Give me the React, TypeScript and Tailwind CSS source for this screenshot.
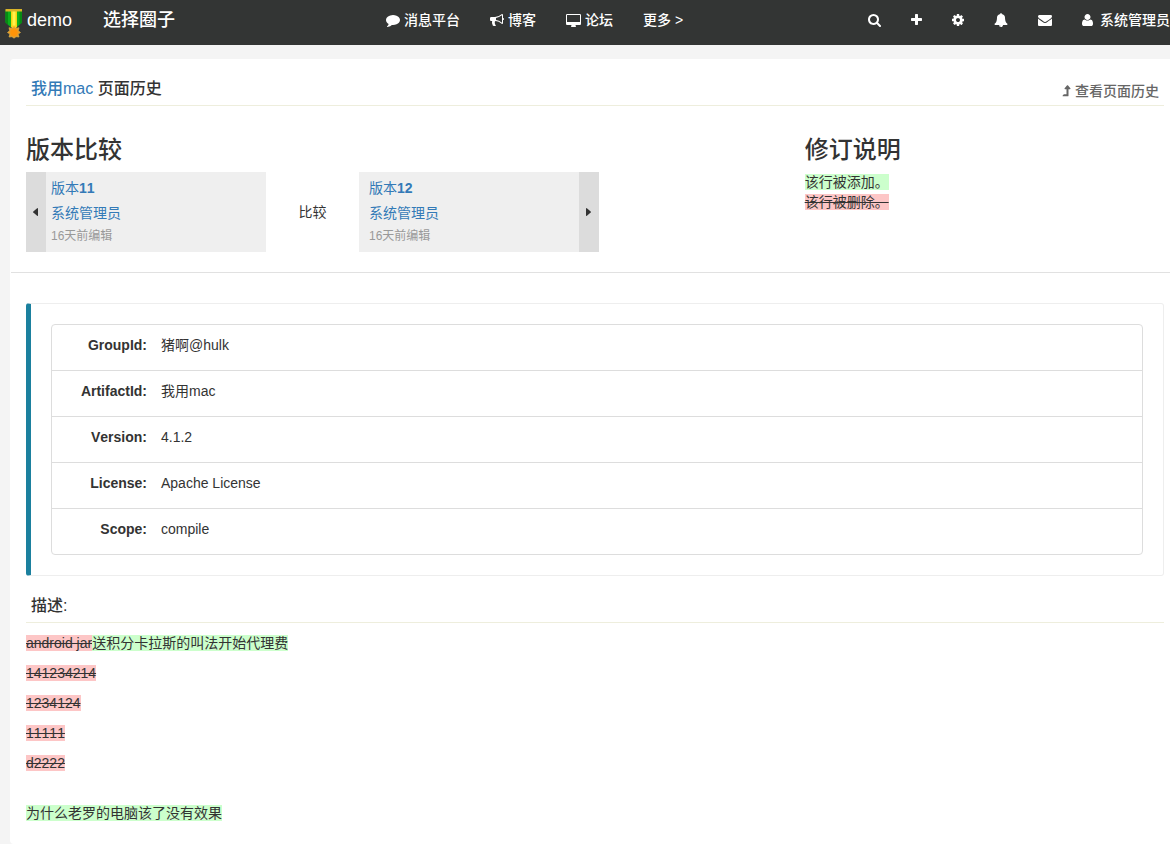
import type { ReactNode } from 'react';

type IconProps = {
  box: string;
  className: string;
  d: string;
};

const Icon = ({ box, className, d }: IconProps) => (
  <svg viewBox={box} className={`shrink-0 ${className}`} fill="currentColor" aria-hidden="true">
    <path d={d} />
  </svg>
);

const paths = {
  comment:
    'M1792 896q0 174-120 321.5t-326 233-450 85.5q-70 0-145-8-198 175-460 242-49 14-114 22-17 2-30.5-9t-17.5-29v-1q-3-4-.5-12t2-10 4.5-9.5l6-9 7-8.5 8-9q7-8 31-34.5t34.5-38 31-39.5 32.5-51 27-59 26-76q-157-89-247.5-220t-90.5-281q0-130 71-248.5t191-204.5 286-136.5 348-50.5q244 0 450 85.5t326 233 120 321.5z',
  bullhorn:
    'M1664 640q53 0 90.5 37.5t37.5 90.5-37.5 90.5-90.5 37.5v384q0 52-38 90t-90 38q-417-347-812-380-58 19-91 66t-31 100.5 40 92.5q-20 33-23 65.5t6 58 33.5 55 48 50 61.5 50.5q-29 58-111.5 83t-168.5 11.5-132-55.5q-7-23-29.5-87.5t-32-94.5-23-89-15-101 3.5-98.5 22-110.5h-122q-66 0-113-47t-47-113v-192q0-66 47-113t113-47h480q435 0 896-384 52 0 90 38t38 90v384zm-128 604v-954q-394 302-768 343v270q377 42 768 341z',
  desktop:
    'M1792 992v-832q0-13-9.5-22.5t-22.5-9.5h-1600q-13 0-22.5 9.5t-9.5 22.5v832q0 13 9.5 22.5t22.5 9.5h1600q13 0 22.5-9.5t9.5-22.5zm128-832v1088q0 66-47 113t-113 47h-544q0 37 16 77.5t32 71 16 43.5q0 26-19 45t-45 19h-512q-26 0-45-19t-19-45q0-14 16-44t32-70 16-78h-544q-66 0-113-47t-47-113v-1088q0-66 47-113t113-47h1600q66 0 113 47t47 113z',
  search:
    'M1216 832q0-185-131.5-316.5t-316.5-131.5-316.5 131.5-131.5 316.5 131.5 316.5 316.5 131.5 316.5-131.5 131.5-316.5zm512 832q0 52-38 90t-90 38q-54 0-90-38l-343-342q-179 124-399 124-143 0-273.5-55.5t-225-150-150-225-55.5-273.5 55.5-273.5 150-225 225-150 273.5-55.5 273.5 55.5 225 150 150 225 55.5 273.5q0 220-124 399l343 343q37 37 37 90z',
  plus: 'M1600 736v192q0 40-28 68t-68 28h-416v416q0 40-28 68t-68 28h-192q-40 0-68-28t-28-68v-416h-416q-40 0-68-28t-28-68v-192q0-40 28-68t68-28h416v-416q0-40 28-68t68-28h192q40 0 68 28t28 68v416h416q40 0 68 28t28 68z',
  cog: 'M1152 896q0-106-75-181t-181-75-181 75-75 181 75 181 181 75 181-75 75-181zm512-109v222q0 12-8 23t-20 13l-185 28q-19 54-39 91 35 50 107 138 10 12 10 25t-9 23q-27 37-99 108t-94 71q-12 0-26-9l-138-108q-44 23-91 38-16 136-29 186-7 28-36 28h-222q-14 0-24.5-8.5t-11.5-21.5l-28-184q-49-16-90-37l-141 107q-10 9-25 9-14 0-25-11-126-114-165-168-7-10-7-23 0-12 8-23 15-21 51-66.5t54-70.5q-27-50-41-99l-183-27q-13-2-21-12.5t-8-23.5v-222q0-12 8-23t19-13l186-28q14-46 39-92-40-57-107-138-10-12-10-24 0-10 9-23 26-36 98.5-107.5t94.5-71.5q13 0 26 10l138 107q44-23 91-38 16-136 29-186 7-28 36-28h222q14 0 24.5 8.5t11.5 21.5l28 184q49 16 90 37l142-107q9-9 24-9 13 0 25 10 129 119 165 170 7 8 7 22 0 12-8 23-15 21-51 66.5t-54 70.5q26 50 41 98l183 28q13 2 21 12.5t8 23.5z',
  bell: 'M912 1696q0-16-16-16-59 0-101.5-42.5t-42.5-101.5q0-16-16-16t-16 16q0 73 51.5 124.5t124.5 51.5q16 0 16-16zm816-288q0 52-38 90t-90 38h-448q0 106-75 181t-181 75-181-75-75-181h-448q-52 0-90-38t-38-90q50-42 91-88t85-119.5 74.5-158.5 50-206 19.5-260q0-152 117-282.5t307-158.5q-8-19-8-39 0-40 28-68t68-28 68 28 28 68q0 20-8 39 190 28 307 158.5t117 282.5q0 139 19.5 260t50 206 74.5 158.5 85 119.5 91 88z',
  envelope:
    'M1792 710v794q0 66-47 113t-113 47h-1472q-66 0-113-47t-47-113v-794q44 49 101 87 362 246 497 345 57 42 92.5 65.5t94.5 48 110 24.5h2q51 0 110-24.5t94.5-48 92.5-65.5q170-123 498-345 57-39 100-87zm0-294q0 79-49 151t-122 123q-376 261-468 325-10 7-42.5 31t-54 38.5-52 32.5-57.5 27-50 9h-2q-23 0-50-9t-57.5-27-52-32.5-54-38.5-42.5-31q-91-64-262-182.5t-205-142.5q-62-42-117-115.5t-55-136.5q0-78 41.5-130t118.5-52h1472q65 0 112.5 47t47.5 113z',
  user: 'M1600 1405q0 120-73 189.5t-194 69.5h-874q-121 0-194-69.5t-73-189.5q0-53 3.5-103.5t14-109 26.5-108.5 43-97.5 62-81 85.5-53.5 111.5-20q9 0 42 21.5t74.5 48 108 48 133.5 21.5 133.5-21.5 108-48 74.5-48 42-21.5q61 0 111.5 20t85.5 53.5 62 81 43 97.5 26.5 108.5 14 109 3.5 103.5zm-320-893q0 159-112.5 271.5t-271.5 112.5-271.5-112.5-112.5-271.5 112.5-271.5 271.5-112.5 271.5 112.5 112.5 271.5z',
  levelUp:
    'M1402 621q-19 37-58 37h-192v864q0 14-9 23t-23 9h-704q-21 0-29-18-8-20 4-35l160-192q9-11 25-11h320v-640h-192q-40 0-58-37-17-37 9-68l320-384q18-22 49-22t49 22l320 384q27 32 9 68z',
};

const Medal = () => (
  <svg viewBox="0 0 18 30" className="h-[30px] w-[18px] shrink-0" aria-hidden="true">
    <path d="M0.5 1h16.500v12.500l-5 4.500h-6.500l-5-4.500z" fill="#0cb01c" />
    <path d="M0.5 1h2.500v14.500l-2.500-2zM14.500 1h2.500v12.500l-2.500 2z" fill="#078a14" />
    <path d="M6 1h6v17h-6z" fill="#f4d410" />
    <path d="M7.500 2h3v16h-3z" fill="#fff14a" />
    <path d="M0.500 0h16.500v2.500h-16.500z" fill="#d8b429" />
    <path d="M6.500 16.500h5v3h-5z" fill="#ffd21c" />
    <path
      d="M9 17.500l1.800 2 3.200-.8-.7 3 2.200 1.800-2.400 1.500.9 3-3-.3-2 1.500-2-1.500-3 .3.9-3-2.400-1.500 2.200-1.800-.7-3 3.200.8z"
      fill="#f09a1e"
      stroke="#d9b04a"
      strokeWidth="0.700"
    />
    <circle cx="9" cy="23.500" r="3.500" fill="#ff9408" />
  </svg>
);

const tools = [
  { label: '搜索', box: '64 0 1664 1792', size: 'h-[14px] w-[13px]', d: paths.search },
  { label: '新建', box: '192 0 1408 1792', size: 'h-[14px] w-[11px]', d: paths.plus },
  { label: '设置', box: '128 0 1536 1792', size: 'h-[14px] w-[12px]', d: paths.cog },
  { label: '通知', box: '0 0 1792 1792', size: 'h-[14px] w-[14px]', d: paths.bell },
  { label: '私信', box: '0 0 1792 1792', size: 'h-[14px] w-[14px]', d: paths.envelope },
];

const artifact = [
  { name: 'GroupId:', value: '猪啊@hulk' },
  { name: 'ArtifactId:', value: '我用mac' },
  { name: 'Version:', value: '4.1.2' },
  { name: 'License:', value: 'Apache License' },
  { name: 'Scope:', value: 'compile' },
];

const removedLines = ['141234214', '1234124', '11111', 'd2222'];

const Added = ({ children }: { children: ReactNode }) => (
  <ins className="bg-[#ccffcc] no-underline">{children}</ins>
);

const Removed = ({ children }: { children: ReactNode }) => (
  <del className="bg-[#fdc6c6] line-through">{children}</del>
);

const Version = ({ number }: { number: number }) => (
  <div className="flex flex-col">
    <a href="#" className="mt-[6px] leading-5 text-[#337ab7]">
      版本<b>{number}</b>
    </a>
    <a href="#" className="mt-[5px] leading-5 text-[#337ab7]">
      系统管理员
    </a>
    <span className="mt-[5px] text-xs leading-4 text-[#999]">16天前编辑</span>
  </div>
);

export default function App() {
  return (
    <div className="flex min-h-screen flex-col overflow-x-hidden bg-[#f4f4f4] font-['Liberation_Sans','Noto_Sans_CJK_SC',sans-serif] text-sm leading-5 text-[#333] [font-kerning:none]">
      {/* Top bar */}
      <nav className="flex h-[45px] items-center bg-[#333534] pb-[5px] pl-[5px] font-medium whitespace-nowrap text-white">
        <a href="#" className="flex items-center gap-1 text-lg leading-5 font-normal">
          <span className="pt-2">
            <Medal />
          </span>
          demo
        </a>
        <a href="#" className="ml-[31px] text-lg leading-5">
          选择圈子
        </a>
        <div className="ml-[211px] flex items-center gap-[30px]">
          <a href="#" className="flex items-center gap-1">
            <Icon box="0 0 1792 1792" className="h-[14px] w-[14px]" d={paths.comment} />
            消息平台
          </a>
          <a href="#" className="flex items-center gap-1">
            <Icon box="0 0 1792 1792" className="h-[14px] w-[14px]" d={paths.bullhorn} />
            博客
          </a>
          <a href="#" className="flex items-center gap-1">
            <Icon box="0 -128 1920 1792" className="h-[14px] w-[15px]" d={paths.desktop} />
            论坛
          </a>
          <a href="#">更多 &gt;</a>
        </div>
        <div className="ml-auto flex items-center gap-[30px]">
          {tools.map((tool) => (
            <button key={tool.label} type="button" aria-label={tool.label}>
              <Icon box={tool.box} className={tool.size} d={tool.d} />
            </button>
          ))}
          <a href="#" className="flex items-center gap-[7px]">
            <Icon box="192 0 1408 1792" className="h-[14px] w-[11px]" d={paths.user} />
            系统管理员
          </a>
        </div>
      </nav>

      {/* The sheet runs off the right side of the window */}
      <main className="mt-[14px] mr-[-10px] ml-[10px] grow rounded border border-b-0 border-white bg-white">
        <header className="mx-[15px] flex h-[46px] items-end justify-between border-b border-[#eeeedd] px-[5px] pb-1">
          <h1 className="text-base leading-6 font-medium">
            <a href="#" className="text-[#337ab7]">
              我用mac
            </a>{' '}
            页面历史
          </h1>
          <a href="#" className="flex items-center gap-1 font-medium text-[#666]">
            <Icon box="320 0 1152 1792" className="h-[14px] w-[9px]" d={paths.levelUp} />
            查看页面历史
          </a>
        </header>

        <section className="flex border-b border-[#e1e1e1] pt-[30px] pb-5">
          <div className="w-2/3 px-[15px]">
            <h2 className="text-2xl leading-7 font-medium">版本比较</h2>
            <div className="mt-2 flex items-center">
              <div className="flex h-20 w-60 gap-[5px] bg-[#efefef]">
                <button type="button" aria-label="上一版本" className="flex w-5 items-center justify-center bg-[#dcdcdc]">
                  <svg viewBox="0 0 6 8" className="h-2 w-[6px]" fill="currentColor" aria-hidden="true">
                    <path d="M5 0.500v7q0 .6-.6.400L.3 4.400q-.4-.4 0-.8L4.400.1q.6-.2.6.4z" />
                  </svg>
                </button>
                <Version number={11} />
              </div>
              <span className="w-[93px] text-center">比较</span>
              <div className="flex h-20 w-60 justify-between bg-[#efefef] pl-[10px]">
                <Version number={12} />
                <button type="button" aria-label="下一版本" className="flex w-5 items-center justify-center bg-[#dcdcdc]">
                  <svg viewBox="0 0 6 8" className="h-2 w-[6px]" fill="currentColor" aria-hidden="true">
                    <path d="M0 0.500v7q0 .6.6.400L4.700 4.400q.4-.4 0-.8L.6.1Q0-.1 0 .5z" />
                  </svg>
                </button>
              </div>
            </div>
          </div>
          <div className="w-1/3 px-[15px]">
            <h2 className="text-2xl leading-7 font-medium">修订说明</h2>
            <p className="mt-2">
              <Added>该行被添加。</Added>
            </p>
            <p>
              <Removed>该行被删除。</Removed>
            </p>
          </div>
        </section>

        <div className="px-[15px] pt-[30px]">
          <section className="rounded-[3px] border border-l-[5px] border-[#eee] border-l-[#1b809e] p-5">
            <dl className="divide-y divide-[#ddd] rounded border border-[#ddd]">
              {artifact.map((row) => (
                <div key={row.name} className="flex gap-[14px] pt-[10px] pb-[15px]">
                  <dt className="w-[95px] text-right font-bold">{row.name}</dt>
                  <dd>{row.value}</dd>
                </div>
              ))}
            </dl>
          </section>

          <h3 className="mt-[18px] border-b border-[#eeeedd] px-[5px] pb-1 text-base leading-6 font-medium">描述:</h3>

          <div className="mt-[10px] space-y-[10px] pb-5">
            <p>
              <Removed>android jar</Removed>
              <Added>送积分卡拉斯的叫法开始代理费</Added>
            </p>
            {removedLines.map((line) => (
              <p key={line}>
                <Removed>{line}</Removed>
              </p>
            ))}
            <p className="pt-5">
              <Added>为什么老罗的电脑该了没有效果</Added>
            </p>
          </div>
        </div>
      </main>
    </div>
  );
}
